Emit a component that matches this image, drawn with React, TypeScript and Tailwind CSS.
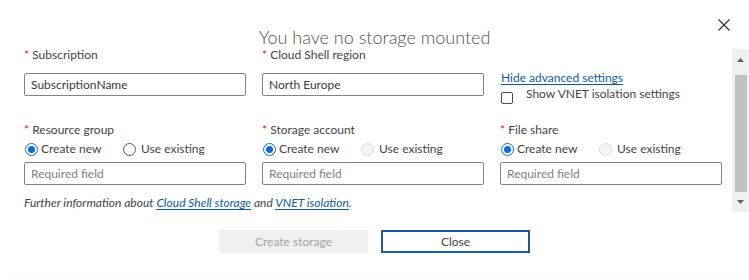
import React from 'react';

const Label: React.FC<{ text: string }> = ({ text }) => (
  <div className="h-[14px] leading-[14px] text-[#444]">
    <span className="text-[#e0201b]">*</span> {text}
  </div>
);

const TextBox: React.FC<{ value?: string; placeholder?: string }> = ({ value, placeholder }) => (
  <div className="h-[23px] w-[222px] border border-[#838383] rounded-[2px] pl-[6px] leading-[21px] bg-white">
    {value ? <span className="text-[#3a3a3a]">{value}</span> : <span className="text-[#808080]">{placeholder}</span>}
  </div>
);

const Radio: React.FC<{ state: 'on' | 'off' | 'disabled' }> = ({ state }) => {
  if (state === 'on') {
    return (
      <span className="w-[13px] h-[13px] rounded-full border border-[#0a6fd1] flex items-center justify-center bg-white">
        <span className="w-[7px] h-[7px] rounded-full bg-[#0a6fd1]" />
      </span>
    );
  }
  if (state === 'disabled') {
    return <span className="w-[13px] h-[13px] rounded-full border border-[#d9d9d9] bg-[#f5f5f5]" />;
  }
  return <span className="w-[13px] h-[13px] rounded-full border border-[#5a5a5a] bg-white" />;
};

const RadioRow: React.FC<{ existingDisabled?: boolean }> = ({ existingDisabled }) => (
  <div className="flex items-center h-[16px] mt-[4px] pl-px">
    <div className="flex items-center w-[98px]">
      <Radio state="on" />
      <span className="ml-[3px] text-[#444]">Create new</span>
    </div>
    <div className="flex items-center">
      <Radio state={existingDisabled ? 'disabled' : 'off'} />
      <span className="ml-[5px] text-[#444]">Use existing</span>
    </div>
  </div>
);

const ScrollArrow: React.FC<{ down?: boolean }> = ({ down }) => (
  <svg width="7" height="4" viewBox="0 0 7 4">
    <polygon points={down ? '0,0 7,0 3.5,4' : '0,4 7,4 3.5,0'} fill="#5f5f5f" />
  </svg>
);

export default function App() {
  return (
    <div className="relative w-[749px] h-[280px] bg-white overflow-hidden flex flex-col text-[12px] font-['Lato','Open_Sans',sans-serif]">
      {/* Title */}
      <div className="h-[48px] pt-[28px] text-center text-[18px] font-light leading-[18px] text-[#505050]">
        You have no storage mounted
      </div>
      <button className="absolute top-[19px] right-[19px] w-[12px] h-[12px]" aria-label="close">
        <svg width="12" height="12" viewBox="0 0 12 12">
          <path d="M0.5 0.5 L11.5 11.5 M11.5 0.5 L0.5 11.5" stroke="#2b2b2b" strokeWidth="1.1" />
        </svg>
      </button>

      {/* Body */}
      <div className="flex h-[165px]">
        <div className="flex-1 pl-[24px]">
          <div className="grid grid-cols-[222px_222px_222px] gap-x-[16px] h-[75px]">
            <div>
              <Label text="Subscription" />
              <div className="mt-[11px]">
                <TextBox value="SubscriptionName" />
              </div>
            </div>
            <div>
              <Label text="Cloud Shell region" />
              <div className="mt-[11px]">
                <TextBox value="North Europe" />
              </div>
            </div>
            <div className="pt-[22px] pl-px">
              <a className="block h-[16px] leading-[16px] text-[#0f5a9e] underline underline-offset-2">Hide advanced settings</a>
              <div className="flex items-start h-[16px]">
                <span className="mt-[6px] w-[12px] h-[12px] rounded-[2px] border border-[#4a4a4a] bg-white" />
                <span className="ml-[13px] leading-[16px] text-[#444]">Show VNET isolation settings</span>
              </div>
            </div>
          </div>

          <div className="grid grid-cols-[222px_222px_222px] gap-x-[16px]">
            <div>
              <Label text="Resource group" />
              <RadioRow />
              <div className="mt-[5px]">
                <TextBox placeholder="Required field" />
              </div>
            </div>
            <div>
              <Label text="Storage account" />
              <RadioRow existingDisabled />
              <div className="mt-[5px]">
                <TextBox placeholder="Required field" />
              </div>
            </div>
            <div>
              <Label text="File share" />
              <RadioRow existingDisabled />
              <div className="mt-[5px]">
                <TextBox placeholder="Required field" />
              </div>
            </div>
          </div>

          <p className="mt-[10px] h-[16px] leading-[16px] italic text-[#444]">
            Further information about{' '}
            <a className="text-[#0f5a9e] underline underline-offset-2">Cloud Shell storage</a> and{' '}
            <a className="text-[#0f5a9e] underline underline-offset-2">VNET isolation</a>.
          </p>
        </div>

        {/* Scrollbar */}
        <div className="w-[17px] mt-[1px] h-[163px] bg-[#f0f0f0] flex flex-col items-center">
          <div className="h-[26px] pt-[9px]">
            <ScrollArrow />
          </div>
          <div className="w-[12px] h-[117px] bg-[#c1c1c1]" />
          <div className="flex-1 flex items-center justify-center">
            <ScrollArrow down />
          </div>
        </div>
      </div>

      {/* Footer */}
      <div className="flex justify-center gap-[13px] pt-[17px]">
        <button className="w-[149px] h-[23px] bg-[#f0f0f0] text-[#a3a3a3] leading-[23px]">Create storage</button>
        <button className="w-[149px] h-[23px] bg-white border-2 border-[#1b5a9a] text-[#444] leading-[19px]">Close</button>
      </div>

      <div className="mt-auto mb-[3px] mx-[8px] h-px bg-[#f6f6f6]" />
    </div>
  );
}
